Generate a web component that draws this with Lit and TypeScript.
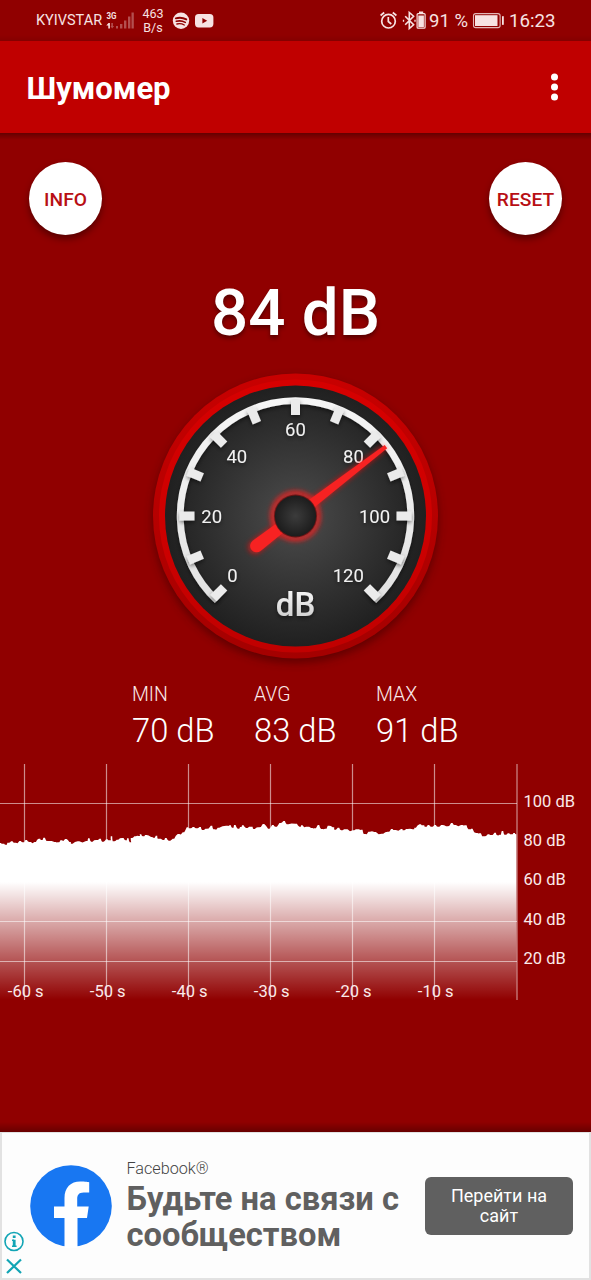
import { LitElement, html, svg, css } from "lit";
import { customElement } from "lit/decorators.js";

const GX = 142.5;
const GY = 146;

function polar(deg: number, r: number): [number, number] {
  const a = (deg * Math.PI) / 180;
  return [GX + r * Math.sin(a), GY - r * Math.cos(a)];
}

@customElement("status-bar")
class StatusBar extends LitElement {
  static styles = css`
    :host { display: flex; height: 41px; color: #f7e2e2; background: linear-gradient(#900000 0 35px, #840000 41px); }
    .carrier { margin-left: 36px; width: 70px; font-size: 14.5px; line-height: 42px; white-space: nowrap; }
    .rate { margin-left: 4px; width: 28px; text-align: center; font-size: 12.5px; line-height: 14.5px; padding-top: 6.5px; }
    .apps { margin-left: 3px; }
    .grow { flex: 1; }
    .pct { width: 43px; font-size: 18.5px; line-height: 42px; white-space: nowrap; }
    .time { width: 82px; font-size: 18.7px; line-height: 42px; }
    .g3 { font: 700 9.5px/1 Roboto, sans-serif; }
    svg { display: block; flex: none; }
  `;
  render() {
    return html`
      <span class="carrier">KYIVSTAR</span>
      <svg width="29" height="41" viewBox="106 0 29 41" fill="#f7e2e2">
        <text class="g3" x="106.5" y="19" textLength="10" lengthAdjust="spacingAndGlyphs">3G</text>
        <path d="M106.300 25.500l2.200-2.500h1.400v5.500h-1.600v-3z" />
        <path opacity=".35" d="M111.300 23h1.600v3h1.200l-2 2.600-1.600-2.600h.8zM116 26h2v2.500h-2zM120 24h2.400v4.500H120zM124 20.500h2.400v8H124zM128 16.500h2.400v12H128zM131.500 12.500h2.300v16h-2.300z" />
      </svg>
      <span class="rate">463<br />B/s</span>
      <svg class="apps" width="46" height="41" viewBox="170 0 46 41">
        <circle cx="181" cy="20.800" r="8.200" fill="#f7e2e2" />
        <g fill="none" stroke="#8e0000" stroke-linecap="round">
          <path stroke-width="1.900" d="M175.800 18.300q5.600-1.600 10.500 1.100" />
          <path stroke-width="1.600" d="M176.300 21.300q4.800-1.300 9 1.100" />
          <path stroke-width="1.300" d="M176.900 24q3.900-1 7.400 1" />
        </g>
        <rect x="195" y="14" width="18.400" height="13.400" rx="3.600" fill="#f7e2e2" />
        <path d="M202.400 17.900v5.600l4.800-2.800z" fill="#8e0000" />
      </svg>
      <span class="grow"></span>
      <svg width="49" height="41" viewBox="380 0 49 41" fill="none" stroke="#f7e2e2">
        <circle cx="388.500" cy="21.200" r="6.800" stroke-width="1.700" />
        <path stroke-width="1.700" d="M388.300 17v4.500l3 2.500M380.600 15.500l3.600-3M396.400 15.500l-3.600-3" />
        <path stroke-width="1.600" d="M405.200 16.200l8.400 8.600-4.300 3.700V12.500l4.300 3.700-8.400 8.600" />
        <path stroke-width="1.300" d="M403.500 19.700v2M415 19.700v2" />
        <rect x="417.100" y="13.600" width="8" height="14.600" rx="1" stroke-width="1.200" />
        <path fill="#f7e2e2" stroke="none" d="M418.300 15.500h5.600v11.500h-5.600zM419 11.500h4.200v1.600H419z" />
      </svg>
      <span class="pct">91 %</span>
      <svg width="37" height="41" viewBox="472 0 37 41">
        <rect x="473.500" y="13.600" width="26.600" height="14" rx="2.200" fill="none" stroke="#f7e2e2" stroke-opacity=".8" stroke-width="1.100" />
        <rect x="475" y="15.200" width="22.500" height="10.800" fill="#f7e2e2" />
        <rect x="502" y="16" width="1.800" height="9" rx=".8" fill="#f7e2e2" />
      </svg>
      <span class="time">16:23</span>
    `;
  }
}

@customElement("noise-gauge")
class NoiseGauge extends LitElement {
  static styles = css`
    :host { display: block; height: 300px; width: 285px; }
    svg { display: block; overflow: visible; }
    .num { font: 400 18.5px Roboto, sans-serif; fill: #f2f2f2; text-anchor: middle; }
    .unit { font: 500 33px Roboto, sans-serif; fill: url(#unit); text-anchor: middle; }
  `;
  render() {
    const labels: [string, number, number][] = [
      ["0", 79.5, 212.3], ["20", 58.7, 152.7], ["40", 83.8, 92.7], ["60", 142.5, 65.7],
      ["80", 200.5, 92.7], ["100", 221.5, 152.7], ["120", 195.3, 212.3],
    ];
    const [ax, ay] = polar(-137.2, 115.3);
    const [bx, by] = polar(137.2, 115.3);
    const ticks = Array.from({ length: 13 }, (_, i) => {
      const [x1, y1] = polar(-135 + i * 22.5, 101);
      const [x2, y2] = polar(-135 + i * 22.5, 116);
      return svg`<path d="M${x1} ${y1}L${x2} ${y2}" stroke-width="9" />`;
    });
    return html`
      <svg width="285" height="300" viewBox="0 0 285 300">
        <defs>
          <radialGradient id="face"><stop offset="0" stop-color="#4c4c4c" /><stop offset=".5" stop-color="#363636" /><stop offset="1" stop-color="#202020" /></radialGradient>
          <radialGradient id="hub"><stop offset="0" stop-color="#3c3c3c" /><stop offset="1" stop-color="#1c1c1c" /></radialGradient>
          <linearGradient id="rim" x2="0" y2="1"><stop offset="0" stop-color="#c80000" /><stop offset="1" stop-color="#a40000" /></linearGradient>
          <linearGradient id="ring" x2="0" y2="1"><stop offset="0" stop-color="#d60000" /><stop offset=".6" stop-color="#cc0000" /><stop offset="1" stop-color="#c00000" /></linearGradient>
          <linearGradient id="unit" x2="0" y2="1"><stop offset="0" stop-color="#fff" /><stop offset="1" stop-color="#c8c8c8" /></linearGradient>
          <linearGradient id="dial" gradientUnits="userSpaceOnUse" x1="0" y1="27" x2="0" y2="235"><stop offset="0" stop-color="#f6f6f6" /><stop offset="1" stop-color="#e2e2e2" /></linearGradient>
          <filter id="soft" x="-30%" y="-30%" width="160%" height="160%"><feGaussianBlur stdDeviation="4" /></filter>
          <filter id="glow" x="-200%" y="-20%" width="500%" height="140%"><feGaussianBlur stdDeviation="2.500" /></filter>
          <filter id="drop" x="-20%" y="-20%" width="140%" height="140%"><feDropShadow dx="0" dy="2" stdDeviation="2" flood-color="#000" flood-opacity=".5" /></filter>
        </defs>
        <circle cx="142.500" cy="150" r="143" fill="#300000" opacity=".5" filter="url(#soft)" />
        <circle cx="142.500" cy="146" r="142.500" fill="url(#rim)" />
        <circle cx="142.500" cy="146" r="136.500" fill="url(#ring)" />
        <circle cx="142.500" cy="146" r="130.500" fill="url(#face)" />
        <g filter="url(#drop)" fill="none" stroke="url(#dial)">
          <path d="M${ax} ${ay}A115.300 115.300 0 1 1 ${bx} ${by}" stroke-width="6.800" />
        </g>
        <g filter="url(#drop)" fill="none" stroke="#ebebeb">${ticks}</g>
        <g filter="url(#drop)">
          ${labels.map(([t, x, y]) => svg`<text class="num" x=${x} y=${y}>${t}</text>`)}
          <text class="unit" x="142.500" y="245.500">dB</text>
        </g>
        <g transform="translate(142.500 146) rotate(52.500)">
          <path d="M-2.500-113L2.500-113L7 51A7 7 0 0 1-7 51Z" fill="#ff1010" opacity=".6" filter="url(#glow)" />
          <circle r="23" fill="none" stroke="#ff1a1a" stroke-width="4" filter="url(#glow)" />
          <path d="M-2-114L2-114L6.500 49A6.500 6.500 0 0 1-6.500 49Z" fill="#f72222" />
        </g>
        <circle cx="142.500" cy="146" r="21.500" fill="#6e1414" />
        <circle cx="142.500" cy="146" r="20.600" fill="url(#hub)" />
      </svg>
    `;
  }
}

// Sound level samples, in thirds of a pixel from the chart's top-left corner.
const SAMPLES =
  "0,249 10,251 18,254 24,248 35,244 45,248 60,243 70,247 78,240 90,246 105,246 118,236 125,240 132,233 145,243 165,246 175,247 183,241 197,237 210,246 215,251 235,244 260,243 266,235 275,245 290,240 300,236 308,245 320,238 330,241 334,229 340,244 352,239 368,234 378,241 383,235 391,247 394,234 405,229 418,228 421,223 430,229 437,225 455,231 462,233 469,227 475,236 490,240 497,234 508,242 520,236 535,222 550,217 562,202 570,205 580,201 590,205 600,201 608,210 618,206 634,197 642,208 655,203 680,197 690,196 698,203 704,195 715,206 722,201 728,196 740,204 755,200 762,207 775,202 790,192 806,206 818,195 828,200 840,189 852,183 862,193 888,191 900,200 905,196 920,200 935,204 945,205 955,195 965,207 977,206 985,197 1000,202 1005,209 1015,203 1025,211 1040,208 1060,211 1075,208 1085,209 1093,222 1107,215 1125,216 1147,221 1165,215 1175,207 1185,210 1205,207 1210,211 1220,207 1240,208 1245,203 1260,193 1270,196 1277,200 1285,195 1295,200 1305,195 1315,200 1325,195 1340,199 1355,189 1365,195 1385,195 1397,196 1407,208 1415,206 1430,219 1440,220 1453,229 1465,223 1475,225 1485,218 1493,226 1500,224 1507,213 1515,224 1525,220 1535,223 1542,219 1549,223";

// Each sample is held as a flat step, one to two pixels wide.
function outline(): string {
  const pts = SAMPLES.split(" ").map((p) => p.split(",").map((n) => Number(n) / 3));
  const out: string[] = [];
  for (let i = 0; i < pts.length - 1; i++) {
    const [x1, y1] = pts[i];
    const [x2, y2] = pts[i + 1];
    const jitter = x2 - x1 > 4 ? (i % 2 ? 0.9 : -0.9) : 0;
    out.push(`${x1 - 0.6},${y1}`, `${x1 + 0.9},${y1}`, `${(x1 + x2) / 2},${(y1 + y2) / 2 + 0.4 + jitter}`);
  }
  const last = pts[pts.length - 1];
  out.push(`${last[0]},${last[1]}`);
  return out.join(" ");
}

@customElement("level-chart")
class LevelChart extends LitElement {
  static styles = css`
    :host { display: block; }
    svg { display: block; }
    text { font: 400 16.5px Roboto, sans-serif; fill: #fbeaea; }
    .tick { text-anchor: middle; }
  `;
  render() {
    const xs = [24.5, 106.5, 188.5, 270.5, 352.5, 434.5];
    return html`
      <svg width="591" height="250" viewBox="0 0 591 250">
        <defs>
          <linearGradient id="fill" gradientUnits="userSpaceOnUse" x1="0" y1="122" x2="0" y2="240">
            <stop offset="0" stop-color="#fff" /><stop offset="1" stop-color="#fff" stop-opacity="0" />
          </linearGradient>
        </defs>
        <polygon points="${outline()} 516.500,240 0,240" fill="url(#fill)" />
        <g stroke="#fff" stroke-opacity=".55" stroke-width="1.200">
          ${[...xs, 517].map((x) => svg`<path d="M${x} 4V240" />`)}
          ${[43.5, 161.5, 201.5].map((y) => svg`<path d="M0 ${y}H517" />`)}
        </g>
        ${xs.map((x, i) => svg`<text class="tick" x=${x + 1.2} y="237.400">-${60 - i * 10} s</text>`)}
        ${[100, 80, 60, 40, 20].map((v, i) => svg`<text x="523.500" y=${46.5 + i * 39.4}>${v} dB</text>`)}
      </svg>
    `;
  }
}

@customElement("ad-banner")
class AdBanner extends LitElement {
  static styles = css`
    :host { display: flex; height: 148px; box-sizing: border-box; background: #fdfdfd; border: solid #e2e2e2; border-width: 1px 2px 2px; }
    .marks { width: 28px; padding-top: 97px; flex: none; }
    .logo { width: 82px; margin-top: 32px; margin-left: -0.5px; flex: none; }
    .copy { width: 296px; margin-left: 15px; flex: none; padding-top: 25px; white-space: nowrap; }
    .brand { font-size: 16.2px; font-weight: 300; line-height: 22px; color: #444; }
    .title { font-size: 32.7px; font-weight: 700; line-height: 36px; color: #606060; margin-top: 1px; }
    .cta { margin: 44px 0 0 2.5px; width: 148px; height: 58px; box-sizing: border-box; border: 0; border-radius: 6px; padding: 0 20px 1px; background: #606060; color: #fff; font: 400 18px/19.5px Roboto, sans-serif; flex: none; }
    svg { display: block; }
  `;
  render() {
    return html`
      <div class="marks">
        <svg width="24" height="46" viewBox="2 1230 24 46" fill="none" stroke="#12a5b5" stroke-width="1.600">
          <circle cx="14" cy="1241.500" r="9" />
          <path stroke-width="2.800" d="M14.200 1239.800v7M14.200 1235.400v2.500" />
          <path stroke-width="1.400" d="M12 1240.300h2M12 1246.200h4.600" />
          <path stroke-width="2.200" d="M7 1259.500l14 13.500M21 1259.500l-14 13.500" />
        </svg>
      </div>
      <svg class="logo" width="82" height="83" viewBox="0 0 82 83">
        <circle cx="41" cy="41" r="40.800" fill="#1877f2" />
        <path fill="#fff" d="M34.500 83V53H24V41.500h10.500V33c0-10.500 6.200-16.500 15.800-16.500 4.500 0 8.900.700 8.900.700V27.500h-5.500c-5.200 0-6.500 3-6.500 6.300v7.700h11.500L57 53h-9.500V83z" />
      </svg>
      <div class="copy">
        <div class="brand">Facebook®</div>
        <div class="title">Будьте на связи с<br />сообществом</div>
      </div>
      <button class="cta">Перейти на сайт</button>
    `;
  }
}

@customElement("app-root")
class AppRoot extends LitElement {
  static styles = css`
    :host { display: flex; flex-direction: column; width: 591px; height: 1280px; overflow: hidden; background: #900000; font-family: Roboto, sans-serif; color: #fff; }
    .bar { display: flex; justify-content: space-between; height: 92px; flex: none; background: #c00000; }
    .bar h1 { margin: 0 0 0 26.5px; font-size: 31px; font-weight: 700; line-height: 95px; }
    .bar svg { display: block; margin-right: 26px; }
    .edge { height: 7px; flex: none; background: linear-gradient(#640000, #900000); }
    .actions { display: flex; justify-content: space-between; padding: 22px 29px 0; height: 73px; flex: none; }
    .round { width: 73px; height: 73px; border: 0; border-radius: 50%; padding: 1px 0 0; background: #fff; color: #b80f14; font: 500 19.2px Roboto, sans-serif; box-shadow: 0 4px 7px rgba(0, 0, 0, .4); white-space: nowrap; }
    .level { margin-top: 36px; height: 102px; flex: none; text-align: center; font-size: 65.5px; font-weight: 500; line-height: 83px; text-shadow: 0 3px 4px rgba(0, 0, 0, .4); }
    noise-gauge { margin-left: 153px; margin-top: -3px; flex: none; }
    .stats { display: grid; grid-template-columns: repeat(3, 122px); margin-left: 132px; margin-top: 13px; height: 77px; flex: none; font-weight: 300; white-space: nowrap; }
    .name { font-size: 19.5px; line-height: 24px; color: #fbeaea; }
    .value { font-size: 32.7px; line-height: 40px; margin-top: 4px; }
    .grow { flex: 1; }
    .shade { height: 10px; flex: none; background: linear-gradient(#900000, #680000); }
    level-chart, ad-banner, status-bar { flex: none; }
  `;
  render() {
    const stats = [["MIN", "70 dB"], ["AVG", "83 dB"], ["MAX", "91 dB"]];
    return html`
      <status-bar></status-bar>
      <header class="bar">
        <h1>Шумомер</h1>
        <svg width="20" height="92" viewBox="0 0 20 92" fill="#fff">
          <circle cx="9.500" cy="36" r="3.500" /><circle cx="9.500" cy="46" r="3.500" /><circle cx="9.500" cy="56" r="3.500" />
        </svg>
      </header>
      <div class="edge"></div>
      <div class="actions">
        <button class="round">INFO</button>
        <button class="round">RESET</button>
      </div>
      <div class="level">84 dB</div>
      <noise-gauge></noise-gauge>
      <div class="stats">
        ${stats.map(([n, v]) => html`<div><div class="name">${n}</div><div class="value">${v}</div></div>`)}
      </div>
      <level-chart></level-chart>
      <div class="grow"></div>
      <div class="shade"></div>
      <ad-banner></ad-banner>
    `;
  }
}
